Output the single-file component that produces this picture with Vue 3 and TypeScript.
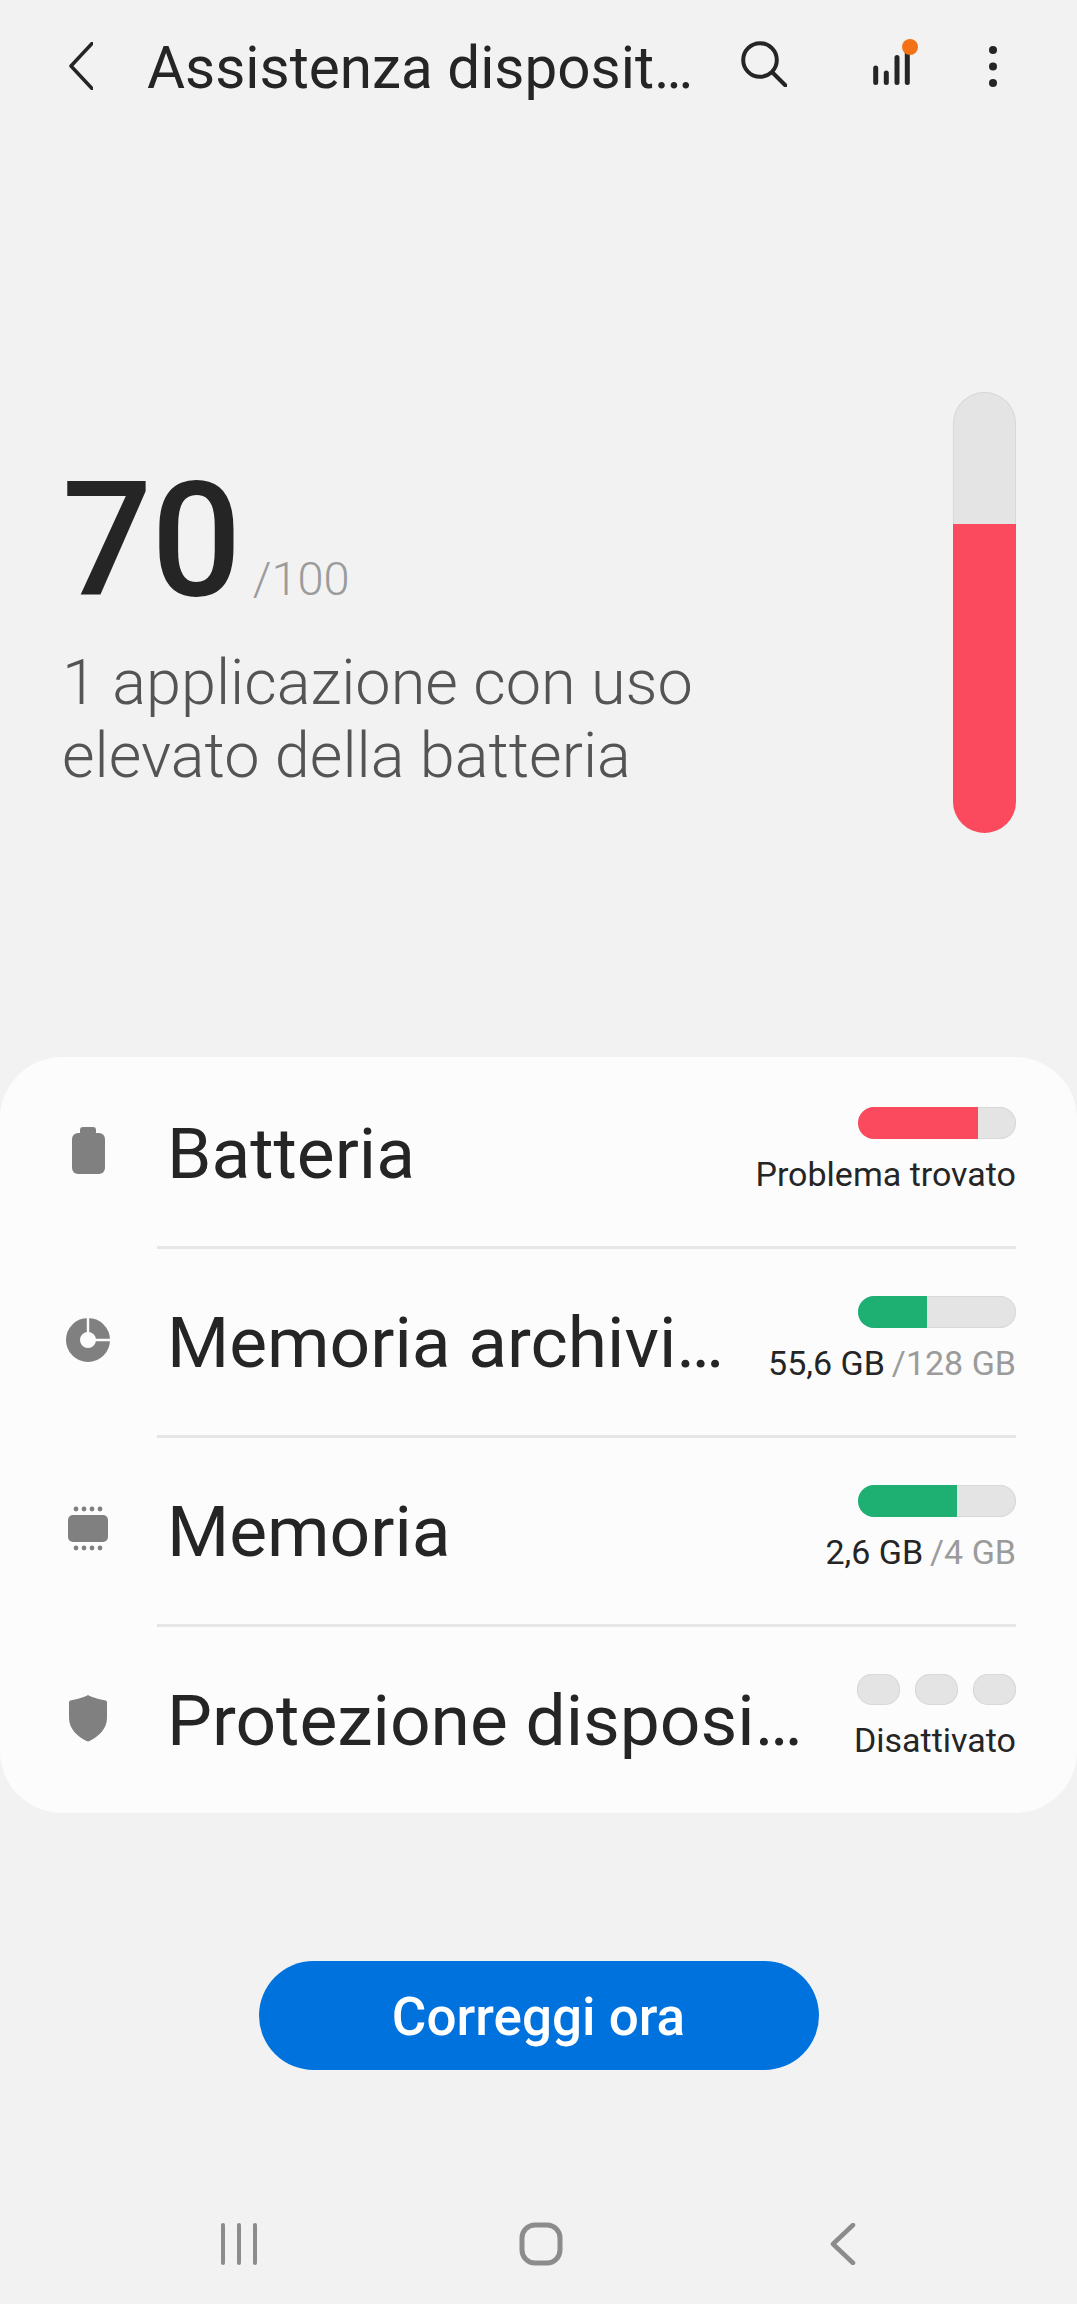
<template>
  <div class="page">
    <header class="topbar">
      <svg class="back-icon" width="24" height="48" viewBox="0 0 24 48">
        <path d="M23 1.5 2 24l21 22.5" fill="none" stroke="#252525" stroke-width="3.5" stroke-linecap="round" stroke-linejoin="round" />
      </svg>
      <h1 class="title">Assistenza disposit…</h1>
      <svg class="search-icon" width="46" height="46" viewBox="0 0 46 46">
        <circle cx="19" cy="19" r="16.800" fill="none" stroke="#252525" stroke-width="4" />
        <path d="m31.500 31.500 13 13" fill="none" stroke="#252525" stroke-width="4" stroke-linecap="round" />
      </svg>
      <svg class="signal-icon" width="48" height="48" viewBox="0 0 48 48">
        <path d="M5.700 29v14.500M16.300 34v9.500M27 18.500v25M37.300 14v29.500" fill="none" stroke="#252525" stroke-width="5" stroke-linecap="round" />
        <circle cx="40" cy="8" r="8" fill="#f47216" />
      </svg>
      <svg class="more-icon" width="10" height="43" viewBox="0 0 10 43">
        <circle cx="5" cy="5" r="4" fill="#252525" />
        <circle cx="5" cy="21.500" r="4" fill="#252525" />
        <circle cx="5" cy="38" r="4" fill="#252525" />
      </svg>
    </header>

    <section class="hero">
      <div class="summary">
        <div class="score">
          <span class="score-value">{{ score }}</span>
          <span class="score-max">/100</span>
        </div>
        <p class="summary-text">1 applicazione con uso<br />elevato della batteria</p>
      </div>
      <div class="gauge">
        <div class="gauge-fill" :style="{ height: score + '%' }"></div>
      </div>
    </section>

    <section class="card">
      <template v-for="(row, index) in rows" :key="row.label">
        <div v-if="index > 0" class="divider"></div>
        <div class="row">
          <svg class="row-icon" width="60" height="60" viewBox="0 0 60 60">
            <g v-if="row.icon === 'battery'" fill="#808080">
              <rect x="14" y="12" width="33" height="41" rx="6" />
              <rect x="22" y="6" width="16" height="12" rx="3" />
            </g>
            <g v-else-if="row.icon === 'storage'">
              <circle cx="30" cy="30" r="15" fill="none" stroke="#808080" stroke-width="14" />
              <path d="M30 6v20M30 30h24" fill="none" stroke="#fcfcfc" stroke-width="2.4" />
            </g>
            <g v-else-if="row.icon === 'memory'" fill="#808080">
              <rect x="10" y="16" width="40" height="27" rx="5" />
              <g v-for="x in [18, 26, 34, 42]" :key="x">
                <circle :cx="x" cy="10" r="2.4" />
                <circle :cx="x" cy="49" r="2.4" />
              </g>
            </g>
            <path
              v-else
              d="M30 7c4 2.500 12 4.500 17.500 5.500 1 .2 1.500 1 1.500 2V30c0 11-9 19-17.500 23-1 .5-2 .5-3 0C20 49 11 41 11 30V14.500c0-1 .5-1.800 1.500-2C18 11.500 26 9.500 30 7Z"
              fill="#808080"
            />
          </svg>
          <span class="row-label">{{ row.label }}</span>
          <div class="row-status">
            <div v-if="row.fill" class="meter">
              <div class="meter-fill" :style="{ width: row.fill + 'px', background: row.color }"></div>
            </div>
            <div v-else class="pills">
              <span class="pill"></span>
              <span class="pill"></span>
              <span class="pill"></span>
            </div>
            <div class="status-text">
              {{ row.status }}<span v-if="row.total" class="status-total">{{ row.total }}</span>
            </div>
          </div>
        </div>
      </template>
    </section>

    <div class="action">
      <button class="fix-button" type="button">Correggi ora</button>
    </div>

    <nav class="navbar">
      <svg width="40" height="42" viewBox="0 0 40 42">
        <path d="M4 2v38M20 2v38M36 2v38" fill="none" stroke="#8c8c8c" stroke-width="4" stroke-linecap="round" />
      </svg>
      <svg width="44" height="44" viewBox="0 0 44 44">
        <rect x="3" y="3" width="38" height="38" rx="13" fill="none" stroke="#8c8c8c" stroke-width="5" />
      </svg>
      <svg width="26" height="42" viewBox="0 0 26 42">
        <path d="M23 2 3 21l20 19" fill="none" stroke="#8c8c8c" stroke-width="4.500" stroke-linecap="round" stroke-linejoin="round" />
      </svg>
    </nav>
  </div>
</template>

<script setup lang="ts">
interface StatusRow {
  label: string;
  icon: 'battery' | 'storage' | 'memory' | 'shield';
  status: string;
  total?: string;
  fill?: number;
  color?: string;
}

const score = 70;

const rows: StatusRow[] = [
  { label: 'Batteria', icon: 'battery', status: 'Problema trovato', fill: 120, color: '#fb4a5e' },
  { label: 'Memoria archivi…', icon: 'storage', status: '55,6 GB', total: '/128 GB', fill: 69, color: '#1eb072' },
  { label: 'Memoria', icon: 'memory', status: '2,6 GB', total: '/4 GB', fill: 99, color: '#1eb072' },
  { label: 'Protezione disposi…', icon: 'shield', status: 'Disattivato' }
];
</script>

<style scoped>
.page {
  display: flex;
  flex-direction: column;
  width: 1077px;
  height: 2304px;
  overflow: hidden;
  background: #f2f2f2;
  color: #252525;
  font-family: Roboto, "Liberation Sans", sans-serif;
}

.topbar {
  display: flex;
  align-items: center;
  flex: none;
  height: 132px;
  padding-left: 69px;
}

.back-icon {
  flex: none;
}

.title {
  flex: none;
  width: 594px;
  margin: 4px 0 0 54px;
  font-size: 58.4px;
  font-weight: 400;
  line-height: 70px;
  white-space: nowrap;
}

.search-icon {
  flex: none;
  margin-bottom: 4px;
}

.signal-icon {
  flex: none;
  margin: -6px 0 0 83px;
}

.more-icon {
  flex: none;
  margin-left: 70px;
}

.hero {
  display: flex;
  justify-content: space-between;
  flex: none;
  height: 925px;
  padding: 0 61px 0 62px;
}

.summary {
  padding-top: 334px;
}

.score {
  display: flex;
  align-items: baseline;
  height: 150px;
  line-height: 150px;
}

.score-value {
  font-size: 159px;
  font-weight: 500;
  letter-spacing: -1px;
}

.score-max {
  margin-left: 12px;
  color: #9b9b9b;
  font-size: 47px;
  font-weight: 300;
}

.summary-text {
  margin: 30px 0 0;
  color: #545454;
  font-size: 63px;
  font-weight: 300;
  line-height: 73px;
}

.gauge {
  display: flex;
  align-items: flex-end;
  flex: none;
  width: 63px;
  height: 441px;
  margin-top: 260px;
  overflow: hidden;
  border-radius: 32px;
  background: #e4e4e4;
  box-shadow: inset 0 0 0 1px #d8d8d8;
}

.gauge-fill {
  width: 100%;
  background: #fb4a5e;
}

.card {
  display: flex;
  flex-direction: column;
  flex: none;
  height: 756px;
  padding-top: 3px;
  box-sizing: border-box;
  border-radius: 62px;
  background: #fcfcfc;
}

.row {
  display: flex;
  flex: none;
  height: 186px;
  padding: 0 61px 0 58px;
}

.divider {
  flex: none;
  height: 3px;
  margin: 0 61px 0 157px;
  background: #e6e6e6;
}

.row-icon {
  flex: none;
  align-self: center;
  margin-top: -4px;
}

.row-label {
  flex: 1;
  align-self: center;
  margin-left: 49px;
  font-size: 71.3px;
  white-space: nowrap;
}

.row-status {
  display: flex;
  flex-direction: column;
  align-items: flex-end;
  flex: none;
  padding-top: 47px;
}

.meter {
  width: 158px;
  height: 32px;
  overflow: hidden;
  border-radius: 16px;
  background: #e4e4e4;
  box-shadow: inset 0 0 0 1px #d8d8d8;
}

.meter-fill {
  height: 100%;
}

.pills {
  display: flex;
  gap: 15px;
}

.pill {
  width: 43px;
  height: 31px;
  border-radius: 15px;
  background: #e4e4e4;
  box-shadow: inset 0 0 0 1px #d8d8d8;
}

.status-text {
  margin-top: 13px;
  font-size: 34px;
  line-height: 44px;
  white-space: nowrap;
}

.status-total {
  margin-left: 7px;
  color: #9b9b9b;
}

.action {
  display: flex;
  justify-content: center;
  flex: none;
  padding-top: 148px;
}

.fix-button {
  width: 560px;
  height: 109px;
  padding: 3px 0 0;
  border: 0;
  border-radius: 55px;
  background: #0072de;
  color: #fff;
  font-family: inherit;
  font-size: 53px;
  font-weight: 500;
}

.navbar {
  display: flex;
  align-items: center;
  flex: none;
  height: 80px;
  margin-top: 134px;
  padding-left: 219px;
}

.navbar svg:nth-child(2) {
  margin-left: 260px;
}

.navbar svg:nth-child(3) {
  margin-left: 267px;
}
</style>

<style>
html,
body {
  margin: 0;
  background: #f2f2f2;
}
</style>
